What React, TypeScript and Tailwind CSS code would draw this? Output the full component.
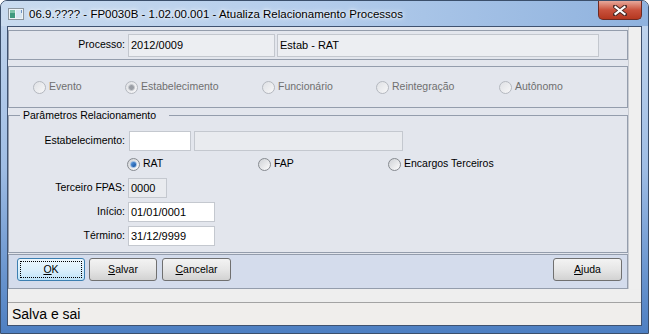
import React from 'react';

function Radio({ checked, disabled }: { checked?: boolean; disabled?: boolean }) {
  return (
    <span
      className={
        disabled
          ? 'flex h-[13px] w-[13px] flex-none items-center justify-center rounded-full border border-[#b4b8bf] bg-gradient-to-br from-[#dfe1e5] to-[#f7f7f8]'
          : 'flex h-[13px] w-[13px] flex-none items-center justify-center rounded-full border border-[#868a90] bg-gradient-to-br from-[#cfd2d6] to-[#fdfdfd]'
      }
    >
      {checked && (
        <span
          className={
            disabled
              ? 'h-[7px] w-[7px] rounded-full border border-[#c9ccd1] bg-[#9a9ea5]'
              : 'h-[7px] w-[7px] rounded-full border border-[#8fb5e0] bg-gradient-to-br from-[#5a9be0] to-[#0e4f9e]'
          }
        />
      )}
    </span>
  );
}

function RadioItem({ label, checked, disabled, w }: { label: string; checked?: boolean; disabled?: boolean; w: string }) {
  return (
    <div className={`flex items-center gap-[3px] ${w}`}>
      <Radio checked={checked} disabled={disabled} />
      <span className={disabled ? 'text-[10.5px] text-[#6f6f6f]' : 'text-[10.5px] text-black'}>{label}</span>
    </div>
  );
}

function Btn({ children, w, focused }: { children: React.ReactNode; w: string; focused?: boolean }) {
  return (
    <div
      className={
        focused
          ? `flex h-[23px] ${w} items-center justify-center rounded-[3px] border border-[#3c7fb1] bg-gradient-to-b from-[#edf7fd] via-[#dcf0fc] to-[#bfe3f8] p-[2px]`
          : `flex h-[23px] ${w} items-center justify-center rounded-[3px] border border-[#707070] bg-gradient-to-b from-[#f3f3f3] via-[#e6e6e6] to-[#d2d2d2]`
      }
    >
      {focused ? (
        <div className="flex h-full w-full items-center justify-center border border-dotted border-black text-[10.5px] text-black">
          {children}
        </div>
      ) : (
        <span className="text-[10.5px] text-black">{children}</span>
      )}
    </div>
  );
}

export default function App() {
  return (
    <div className="flex h-[334px] w-[649px] flex-col overflow-hidden rounded-t-[7px] border border-[#3b4f6b] bg-gradient-to-b from-[#c4d7ee] via-[#9fbde4] to-[#4d7fc2] font-['Liberation_Sans',Arial,sans-serif]">
      {/* title bar */}
      <div className="flex h-[25px] flex-none items-start bg-gradient-to-r from-[#c9dbef] via-[#b3cceb] to-[#8fb2de] pr-[6px]">
        <div className="ml-[7px] mt-[7px] flex-none">
          <svg width="16" height="12" viewBox="0 0 16 12">
            <rect x="0.5" y="0.5" width="15" height="11" fill="#eef3f6" stroke="#8a949c" />
            <rect x="2" y="2" width="5" height="8" fill="#3f9a7e" />
            <rect x="2" y="2" width="5" height="3" fill="#7cc3a8" />
            <rect x="8" y="2" width="6" height="8" fill="#d7e6f2" />
            <rect x="13" y="2" width="1" height="3" fill="#6f93c3" />
          </svg>
        </div>
        <div className="ml-[5px] mt-[6px] text-[11.5px] leading-[14px] text-black [text-shadow:0_0_6px_#ffffff,0_0_3px_#ffffff]">
          06.9.???? - FP0030B - 1.02.00.001 - Atualiza Relacionamento Processos
        </div>
        <div className="ml-auto flex h-[19px] w-[44px] flex-none items-center justify-center rounded-b-[5px] border border-t-0 border-[#6d2a22] bg-gradient-to-b from-[#e6a89b] via-[#c9513c] to-[#b5371f]">
          <svg width="14" height="11" viewBox="0 0 14 11">
            <path d="M2 1.5 L12 9.5 M12 1.5 L2 9.5" stroke="#4a2a26" strokeWidth="4" strokeLinecap="square" />
            <path d="M2.5 2 L11.5 9 M11.5 2 L2.5 9" stroke="#ffffff" strokeWidth="2.2" strokeLinecap="square" />
          </svg>
        </div>
      </div>

      {/* body */}
      <div className="flex flex-1 flex-col px-[6px] pb-[7px]">
        <div className="flex h-[300px] flex-col border border-[#3f5270] bg-[#eeeeee]">
          <div className="flex h-[262px] flex-none">
            {/* main column */}
            <div className="flex w-[620px] flex-none flex-col bg-[#e3e6ed] pt-[3px]">
              {/* panel 1 */}
              <div className="flex h-[30px] items-center border border-[#949dac]">
                <div className="mr-[3px] w-[116px] text-right text-[10.5px] text-black">Processo:</div>
                <div className="flex h-[23px] w-[147px] items-center border border-[#c3c7ce] bg-[#eceef2] pl-[2px] text-[11px] text-black">
                  2012/0009
                </div>
                <div className="ml-[2px] flex h-[23px] w-[322px] items-center border border-[#c3c7ce] bg-[#eceef2] pl-[2px] text-[11px] text-black">
                  Estab - RAT
                </div>
              </div>
              {/* panel 2 */}
              <div className="mt-[6px] flex h-[42px] items-center border border-[#949dac] pl-[24px]">
                <RadioItem label="Evento" disabled w="w-[92px]" />
                <RadioItem label="Estabelecimento" checked disabled w="w-[137px]" />
                <RadioItem label="Funcionário" disabled w="w-[114px]" />
                <RadioItem label="Reintegração" disabled w="w-[123px]" />
                <RadioItem label="Autônomo" disabled w="w-[100px]" />
              </div>
              {/* group box */}
              <div className="relative mt-[7px] flex h-[138px] flex-col border border-[#949dac] pt-[15px]">
                <div className="absolute -top-[7px] left-[11px] bg-[#e3e6ed] pl-[3px] pr-[13px] text-[10.5px] leading-[12px] text-black">
                  Parâmetros Relacionamento
                </div>
                <div className="flex h-[20px] items-center">
                  <div className="mr-[4px] w-[116px] text-right text-[10.5px] text-black">Estabelecimento:</div>
                  <div className="h-[20px] w-[62px] border border-[#c4c8cf] bg-white" />
                  <div className="ml-[3px] h-[20px] w-[209px] border border-[#c4c8cf] bg-[#e9ebef]" />
                </div>
                <div className="mt-[3px] flex h-[20px] items-center pl-[118px]">
                  <RadioItem label="RAT" checked w="w-[131px]" />
                  <RadioItem label="FAP" w="w-[130px]" />
                  <RadioItem label="Encargos Terceiros" w="w-[140px]" />
                </div>
                <div className="mt-[4px] flex h-[20px] items-center">
                  <div className="mr-[3px] w-[116px] text-right text-[10.5px] text-black">Terceiro FPAS:</div>
                  <div className="flex h-[20px] w-[39px] items-center border border-[#c4c8cf] bg-[#e9ebef] pl-[2px] text-[11px] text-black">
                    0000
                  </div>
                </div>
                <div className="mt-[4px] flex h-[20px] items-center">
                  <div className="mr-[3px] w-[116px] text-right text-[10.5px] text-black">Início:</div>
                  <div className="flex h-[20px] w-[87px] items-center border border-[#c4c8cf] bg-white pl-[2px] text-[11px] text-black">
                    01/01/0001
                  </div>
                </div>
                <div className="mt-[4px] flex h-[20px] items-center">
                  <div className="mr-[3px] w-[116px] text-right text-[10.5px] text-black">Término:</div>
                  <div className="flex h-[20px] w-[87px] items-center border border-[#c4c8cf] bg-white pl-[2px] text-[11px] text-black">
                    31/12/9999
                  </div>
                </div>
              </div>
              {/* button panel */}
              <div className="mt-[1px] flex h-[35px] items-start border border-[#949dac] bg-[#d4dcec] pl-[8px] pr-[5px] pt-[3px]">
                <Btn w="w-[68px]" focused>
                  <span className="underline">O</span>K
                </Btn>
                <div className="ml-[4px]">
                  <Btn w="w-[68px]">
                    <span className="underline">S</span>alvar
                  </Btn>
                </div>
                <div className="ml-[5px]">
                  <Btn w="w-[69px]">
                    <span className="underline">C</span>ancelar
                  </Btn>
                </div>
                <div className="ml-auto">
                  <Btn w="w-[69px]">
                    <span className="underline">A</span>juda
                  </Btn>
                </div>
              </div>
            </div>
            {/* right strip */}
            <div className="w-[13px] flex-none border-l border-[#c9ccd2] bg-[#efefef]" />
          </div>
          <div className="h-[13px] flex-none bg-[#eeeeee]" />
          <div className="flex flex-1 items-center border-t border-[#a3a3a3] bg-[#f0eeec] pl-[4px] text-[14px] text-black">
            Salva e sai
          </div>
        </div>
      </div>
    </div>
  );
}
